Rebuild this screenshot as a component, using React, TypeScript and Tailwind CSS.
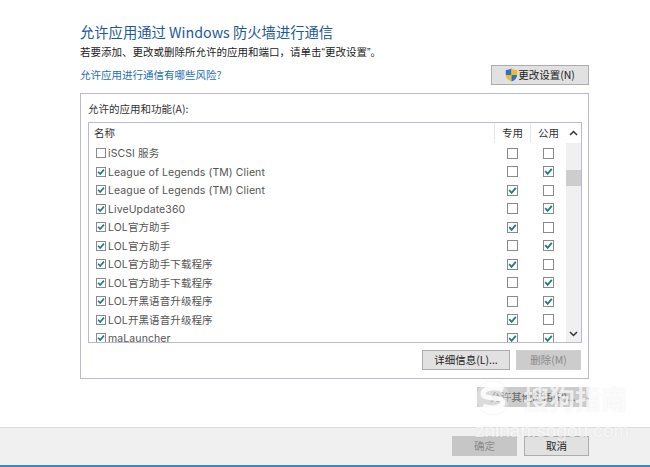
const rows: [string, boolean, boolean, boolean][] = [
  ["iSCSI 服务", false, false, false],
  ["League of Legends (TM) Client", true, false, true],
  ["League of Legends (TM) Client", true, true, false],
  ["LiveUpdate360", true, false, true],
  ["LOL官方助手", true, true, false],
  ["LOL官方助手", true, false, true],
  ["LOL官方助手下载程序", true, true, false],
  ["LOL官方助手下载程序", true, false, true],
  ["LOL开黑语音升级程序", true, false, true],
  ["LOL开黑语音升级程序", true, true, false],
  ["maLauncher", true, true, true],
];

function Check({ on }: { on: boolean }) {
  return (
    <span className="flex h-[11px] w-[11px] shrink-0 items-center justify-center border border-[#8a8a8a] bg-white">
      {on && (
        <svg width="9" height="9" viewBox="0 0 9 9" fill="none">
          <path d="M1.2 4.2 L3.6 6.8 L7.8 1.8" stroke="#1f7f78" strokeWidth="1.8" />
        </svg>
      )}
    </span>
  );
}

function SmallCheck({ on }: { on: boolean }) {
  return (
    <span className="flex h-[10px] w-[10px] shrink-0 items-center justify-center border border-[#8a8a8a] bg-white">
      {on && (
        <svg width="8" height="8" viewBox="0 0 9 9" fill="none">
          <path d="M1.2 4.2 L3.6 6.8 L7.8 1.8" stroke="#1f7f78" strokeWidth="1.9" />
        </svg>
      )}
    </span>
  );
}

function Shield() {
  return (
    <svg width="13" height="14" viewBox="0 0 13 14">
      <path d="M6.5 0.5 L6.5 7 L0.8 7 L0.8 2 C3 2 5 1.5 6.5 0.5Z" fill="#2f6fc4" />
      <path d="M6.5 0.5 C8 1.5 10 2 12.2 2 L12.2 7 L6.5 7Z" fill="#f0b92d" />
      <path d="M0.8 7 L6.5 7 L6.5 13.5 C3 12.3 1 10 0.8 7Z" fill="#f0b92d" />
      <path d="M6.5 7 L12.2 7 C12 10 10 12.3 6.5 13.5Z" fill="#2f6fc4" />
    </svg>
  );
}

export default function App() {
  return (
    <div className="relative flex h-[467px] w-[650px] flex-col overflow-hidden bg-white font-['Noto_Sans_CJK_SC','Noto_Sans',sans-serif] text-[#222]">
      <div className="flex h-[427px] flex-col pl-[80px] pr-[61px] pt-[22px]">
        <h1 className="h-[19px] text-[14.3px] leading-[19px] font-normal whitespace-nowrap text-[#1c5a96]">允许应用通过 Windows 防火墙进行通信</h1>
        <p className="mt-[3px] h-[16px] whitespace-nowrap text-[10.5px] leading-[16px] text-[#222]">
          若要添加、更改或删除所允许的应用和端口，请单击<span className="font-['Liberation_Sans']">“</span>更改设置<span className="font-['Liberation_Sans']">”</span>。
        </p>
        <div className="mt-[5px] flex h-[20px] items-start justify-between">
          <a className="pt-[2px] text-[10.5px] leading-[16px] text-[#1c6fb5]">允许应用进行通信有哪些风险?</a>
          <button className="flex h-[20px] w-[98px] items-center justify-center border border-[#adadad] bg-[#e1e1e1] text-[10.5px] text-[#222]">
            <Shield />
            <span>更改设置(N)</span>
          </button>
        </div>
        <section className="mt-[8px] flex h-[286px] flex-col border border-[#b9b9d6] px-[7px] pt-[7px]">
          <div className="h-[21px] text-[10.5px] leading-[16px] text-[#333]">允许的应用和功能(A):</div>
          <div className="flex h-[221px] w-[494px] border border-[#b9b9d6]">
            <div className="flex min-w-0 flex-1 flex-col overflow-hidden">
              <div className="flex h-[20px] shrink-0 text-[10.5px] leading-[20px] text-[#333]">
                <div className="flex-1 pl-[5px]">名称</div>
                <div className="w-[36px] border-l border-[#e5e5e5] text-center">专用</div>
                <div className="w-[36px] border-l border-[#e5e5e5] text-center">公用</div>
              </div>
              <div className="pt-[1px]">
                {rows.map(([name, a, b, c], i) => (
                  <div key={i} className="flex h-[18.5px] items-center text-[10.5px] text-[#555]">
                    <div className="flex flex-1 items-center gap-[2px] pl-[7px] font-['Inter','Noto_Sans_CJK_SC',sans-serif] tracking-[0.1px] whitespace-nowrap">
                      <SmallCheck on={a} />
                      <span className="pt-[2px]">{name}</span>
                    </div>
                    <div className="flex w-[36px] justify-center"><Check on={b} /></div>
                    <div className="flex w-[36px] justify-center"><Check on={c} /></div>
                  </div>
                ))}
              </div>
            </div>
            <div className="flex w-[15px] shrink-0 flex-col bg-[#f0f0f0]">
              <div className="flex h-[20px] items-center justify-center bg-white">
                <svg width="9" height="6" viewBox="0 0 9 6" fill="none"><path d="M1 5 L4.5 1.5 L8 5" stroke="#333" strokeWidth="1.5" /></svg>
              </div>
              <div className="mt-[27px] h-[16px] bg-[#cdcdcd]" />
              <div className="mt-auto flex h-[16px] items-center justify-center">
                <svg width="9" height="6" viewBox="0 0 9 6" fill="none"><path d="M1 1 L4.5 4.5 L8 1" stroke="#333" strokeWidth="1.5" /></svg>
              </div>
            </div>
          </div>
          <div className="mt-[7px] flex justify-end gap-[6px]">
            <button className="h-[20px] w-[88px] border border-[#adadad] bg-[#e1e1e1] text-[10.5px] text-[#222]">详细信息(L)...</button>
            <button className="h-[20px] w-[65px] border border-[#cfcfcf] bg-[#cccccc] text-[10.5px] text-[#8a8a8a]">删除(M)</button>
          </div>
        </section>
        <div className="mt-[8px] flex justify-end">
          <button className="h-[20px] w-[112px] bg-[#cccccc] text-[10.5px] text-[#666]">允许其他应用(R)...</button>
        </div>
      </div>
      <footer className="flex h-[38px] items-start justify-end gap-[7px] border-t border-[#dcdcdc] bg-[#f0f0f0] pr-[61px] pt-[8px]">
        <button className="h-[20px] w-[65px] bg-[#c6c6c6] text-[10.5px] text-[#8a8a8a]">确定</button>
        <button className="h-[20px] w-[65px] border border-[#adadad] bg-[#e1e1e1] text-[10.5px] text-[#222]">取消</button>
      </footer>
      <div className="h-[2px] bg-[#3b87c8]" />
      <div className="absolute left-[475px] top-[380px] flex items-center gap-[12px] text-white/75 [text-shadow:0_0_2px_rgba(0,0,0,0.08)]">
        <svg width="36" height="36" viewBox="0 0 36 36" fill="none">
          <circle cx="18" cy="18" r="17" fill="#ffffff" fillOpacity="0.3" stroke="#000000" strokeOpacity="0.04" />
          <path d="M28 10 C20 6 8 8 8 14 C8 20 28 16 28 22 C28 28 15 29 8 26" stroke="#ffffff" strokeOpacity="0.85" strokeWidth="5" />
        </svg>
        <span className="text-[26px] leading-[32px] font-bold whitespace-nowrap">搜狗指南</span>
      </div>
      <div className="absolute left-[475px] top-[419px] font-['Liberation_Sans'] text-[19px] leading-[24px] whitespace-nowrap text-white/70 [text-shadow:0_0_2px_rgba(0,0,0,0.08)]">zhinan.sogou.com</div>
    </div>
  );
}
